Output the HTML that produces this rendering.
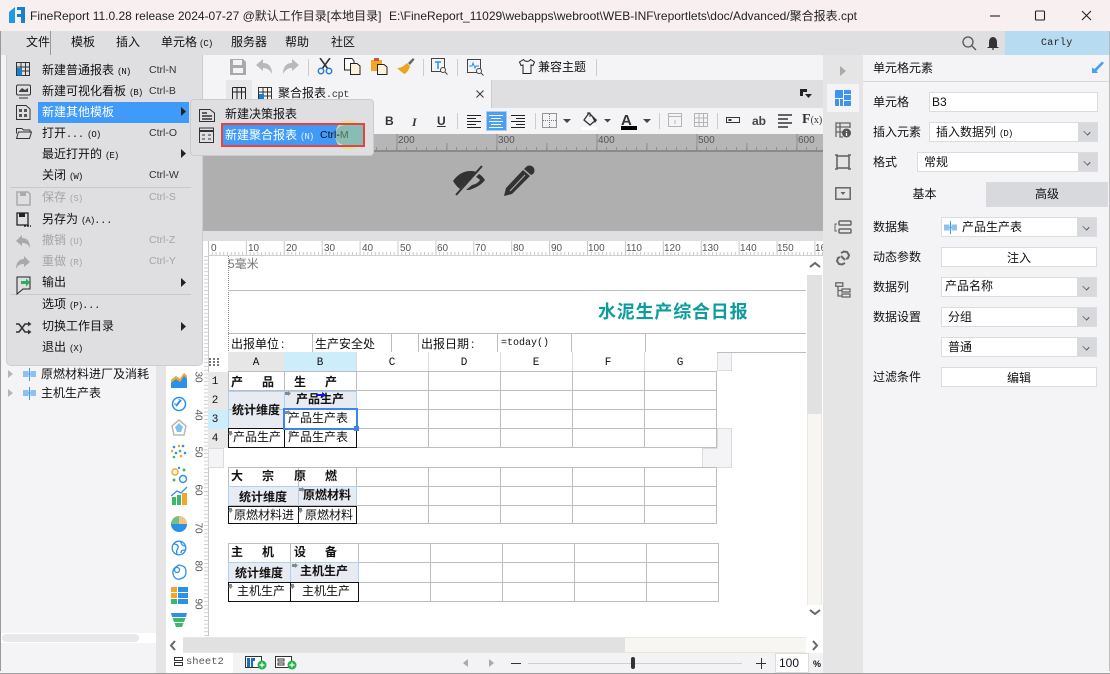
<!DOCTYPE html>
<html><head><meta charset="utf-8"><style>
html,body{margin:0;padding:0;width:1110px;height:674px;overflow:hidden;background:#fff}
#p{position:relative;width:1110px;height:674px;overflow:hidden;font:12px/12px "Liberation Sans","WenQuanYi Zen Hei","Noto Sans CJK SC",sans-serif;color:#111}
.b,.t,svg.a{position:absolute}
.t{white-space:nowrap;line-height:12px}
.m{font-family:"Liberation Mono","WenQuanYi Zen Hei",monospace}
.q{font-family:"Liberation Mono",monospace;font-size:9px;letter-spacing:-1px;margin-left:3px}
.s{font-size:10.5px;color:#333}
.g{color:#a5a5a5}
.r{font:10px/10px "Liberation Sans",sans-serif;color:#555}
.d{background:#fff;border:1px solid #dcdcdf;box-sizing:border-box}
.ar{position:absolute;top:0;right:0;width:19px;height:100%;background:#d8d9dc}
.ar:after{content:"";position:absolute;left:6px;top:6px;width:5px;height:5px;border:solid #555;border-width:0 1px 1px 0;transform:rotate(45deg) scaleY(.7)}
.c{text-align:center}
</style></head><body><div id="p">
<!-- title bar -->
<div class="b" style="left:0;top:0;width:1110px;height:31px;background:#f8f0f0"></div>
<div class="b" style="left:0;top:31px;width:1110px;height:24px;background:#dfdfe1"></div>
<svg class="a" style="left:9px;top:7px" width="16" height="16" viewBox="0 0 16 16"><path d="M0 5L6 0V16H0Z" fill="#1c9be6"/><path d="M8 0H16V16H12V10H8V7H12V3H8Z" fill="#1b7fd0"/></svg>
<div class="t" style="left:30px;top:10px;font-family:'Liberation Sans','Noto Sans CJK SC',sans-serif;font-size:12px;color:#222">FineReport 11.0.28 release 2024-07-27 @默认工作目录[本地目录]</div>
<div class="t" style="left:389px;top:10px;font-family:'Liberation Sans','Noto Sans CJK SC',sans-serif;font-size:12px;color:#222">E:\FineReport_11029\webapps\webroot\WEB-INF\reportlets\doc/Advanced/聚合报表.cpt</div>
<svg class="a" style="left:990px;top:8px" width="110" height="16" fill="none" stroke="#222" stroke-width="1.1"><path d="M0 8H10"/><rect x="45.5" y="3" width="9" height="9" rx="1"/><path d="M92 3L101 12M101 3L92 12"/></svg>
<!-- menu bar right -->
<svg class="a" style="left:961px;top:35px" width="40" height="16" fill="none" stroke="#555" stroke-width="1.3"><circle cx="7" cy="7" r="5"/><path d="M11 11L15 15"/><path d="M28 12V7C28 4 30 2 32 2S36 4 36 7V12H37.5V13H26.5V12Z" fill="#333" stroke="none"/><path d="M31 14H33" stroke="#333"/></svg>
<div class="b" style="left:1005px;top:31px;width:104px;height:24px;background:#b7dbf0"></div>
<div class="t m" style="left:1041px;top:38px;font-size:10px;letter-spacing:.3px;color:#222">Carly</div>
<!-- main toolbars -->
<div class="b" style="left:166px;top:55px;width:657px;height:79px;background:#f4f4f6"></div>
<div class="b" style="left:226px;top:80px;width:597px;height:28px;background:#dfdfe1"></div>
<div class="b" style="left:226px;top:80px;width:266px;height:28px;background:#f4f4f6;border-right:1px solid #ccc;box-sizing:border-box"></div>
<div class="b" style="left:226px;top:80px;width:26px;height:28px;background:#e7e7e9"></div>
<svg class="a" style="left:232px;top:87px" width="14" height="14" fill="none" stroke="#222"><path d="M.5.5H13.5M.5 5H13.5M.5.5V13M5 .5V13M9.5 .5V13M13.5 .5V13"/></svg>
<svg class="a" style="left:258px;top:87px" width="14" height="14" fill="none" stroke="#333"><path d="M.5.5H13.5V13.5H.5ZM.5 5H13.5M5 .5V13.5M9.5 .5V13.5M5 9H13.5"/><rect x="1" y="7" width="5" height="6.5" fill="#1b7fd0" stroke="none"/></svg>
<div class="t" style="left:278px;top:87px">聚合报表<span class="m" style="font-size:10px;letter-spacing:-.2px;color:#333">.cpt</span></div>
<svg class="a" style="left:476px;top:90px" width="8" height="8" stroke="#333"><path d="M.5.5L7.5 7.5M7.5.5L.5 7.5"/></svg>
<svg class="a" style="left:799px;top:88px" width="14" height="11"><path d="M1 1H8V4H4V8H1Z" fill="#222"/><path d="M6 6H13L9.5 10Z" fill="#222"/></svg>
<!-- toolbar icons -->
<svg class="a" style="left:229px;top:58px" width="18" height="18"><path d="M1 1H14L17 4V17H1Z" fill="#a9a9ab"/><rect x="4" y="2" width="9" height="5" fill="#f4f4f6"/><rect x="4" y="10" width="10" height="5" fill="#f4f4f6"/></svg>
<svg class="a" style="left:256px;top:59px" width="44" height="16" fill="#b9b9bb"><path d="M0 6L7 0V4C13 4 16 8 16 15C14 11 11 9 7 9V12Z"/><path d="M43 6L36 0V4C30 4 27 8 27 15C29 11 32 9 36 9V12Z"/></svg>
<div class="b" style="left:308px;top:59px;width:1px;height:17px;background:#ccc"></div>
<svg class="a" style="left:317px;top:58px" width="16" height="17" fill="none"><path d="M3 0L11 11M13 0L5 11" stroke="#333" stroke-width="1.6"/><circle cx="4" cy="13" r="2.7" stroke="#2a7fd5" stroke-width="1.5"/><circle cx="12" cy="13" r="2.7" stroke="#2a7fd5" stroke-width="1.5"/></svg>
<svg class="a" style="left:344px;top:58px" width="17" height="17" stroke="#222"><path d="M.5.5H8L10 3V12H.5Z" fill="#fff"/><path d="M6.5 5.5H13L16 8V16.5H6.5Z" fill="#fdf3dc"/></svg>
<svg class="a" style="left:371px;top:58px" width="17" height="17"><path d="M0 2H11V13H0Z" fill="#f0a820"/><rect x="3" y="0" width="5" height="3" fill="#d05050"/><path d="M6.5 6.5H13L16 9V16.5H6.5Z" fill="#fdf3dc" stroke="#222"/></svg>
<svg class="a" style="left:397px;top:58px" width="18" height="17"><path d="M11 5L16 0L17.500 1.500L13 7Z" fill="#666"/><path d="M0 10C5 10 8 7 10 5L13 8C12 12 9 16 7 16C5 14 3 13 0 10Z" fill="#eea41f"/></svg>
<div class="b" style="left:423px;top:59px;width:1px;height:17px;background:#ccc"></div>
<svg class="a" style="left:431px;top:58px" width="17" height="17" fill="none" stroke="#444"><rect x=".5" y=".5" width="13" height="13"/><path d="M4 4H10M7 4V11" stroke="#2a8fe8" stroke-width="1.500"/><circle cx="12" cy="12" r="2.500" fill="#f4f4f6"/><path d="M14 14L16.500 16.500"/></svg>
<div class="b" style="left:457px;top:59px;width:1px;height:17px;background:#ccc"></div>
<svg class="a" style="left:467px;top:59px" width="17" height="17" fill="none" stroke="#444"><rect x=".5" y=".5" width="13" height="13"/><path d="M2 7H5L6 4L8 9L9 7H12" stroke="#2a8fe8"/><circle cx="12" cy="12" r="2.500" fill="#f4f4f6"/><path d="M14 14L16.500 16.500"/></svg>
<svg class="a" style="left:519px;top:59px" width="16" height="15" fill="none" stroke="#222"><path d="M4.500.5L.5 3L2 6.500L4 6V14.500H12V6L14 6.500L15.500 3L11.500.5C10 3 6 3 4.500.5Z"/></svg>
<div class="t" style="left:538px;top:61px">兼容主题</div>
<div class="b" style="left:596px;top:59px;width:1px;height:17px;background:#ccc"></div>
<!-- format bar -->
<div class="t" style="left:385px;top:115px;font-weight:bold;color:#333">B</div>
<div class="t" style="left:412px;top:115px;font:italic bold 12px 'Liberation Serif',serif;color:#333">I</div>
<div class="t" style="left:437px;top:115px;font-weight:bold;color:#333;text-decoration:underline">U</div>
<div class="b" style="left:457px;top:113px;width:1px;height:16px;background:#ccc"></div>
<div class="b" style="left:486px;top:111px;width:21px;height:20px;background:#4a9ff5;border:1px solid #b5cbe3;box-sizing:border-box"></div>
<svg class="a" style="left:466px;top:115px" width="62" height="13"><path d="M1 .5H15M1 3.500H10M1 6.500H15M1 9.500H10M1 12.500H15" stroke="#222"/><path d="M23 .5H37M25 3.500H35M23 6.500H37M25 9.500H35M23 12.500H37" stroke="#fff"/><path d="M45 .5H59M50 3.500H59M45 6.500H59M50 9.500H59M45 12.500H59" stroke="#222"/></svg>
<div class="b" style="left:535px;top:113px;width:1px;height:16px;background:#ccc"></div>
<svg class="a" style="left:542px;top:113px" width="30" height="16"><rect x=".5" y=".5" width="14" height="14" fill="none" stroke="#333" stroke-dasharray="1 1"/><path d="M7.500 1V15M1 7.500H15" stroke="#777" stroke-dasharray="1 1"/><path d="M21 6H29L25 10Z" fill="#444"/></svg>
<svg class="a" style="left:581px;top:112px" width="32" height="18"><path d="M8 1L15 8L9 13L3 8Z" fill="#f4f4f6" stroke="#333" stroke-width="1.300"/><path d="M6 1H9V5" fill="none" stroke="#333"/><path d="M10 3L16 8L14 11Z" fill="#333"/><rect x="0" y="15" width="16" height="3" fill="#fff"/><path d="M23 7H30L26.500 10.500Z" fill="#444"/></svg>
<svg class="a" style="left:621px;top:113px" width="34" height="17"><text x="0" y="12" font-family="Liberation Sans" font-weight="bold" font-size="15" fill="#333">A</text><rect x="0" y="13" width="16" height="4" fill="#000"/><path d="M22 6H30L26 10Z" fill="#444"/></svg>
<div class="b" style="left:659px;top:113px;width:1px;height:16px;background:#ccc"></div>
<svg class="a" style="left:668px;top:113px" width="48" height="15" fill="none" stroke="#b5b5b5"><rect x=".5" y=".5" width="13" height="13"/><path d="M.5 3.500H13.500M7 7V11"/><rect x="26.500" y=".5" width="13" height="13"/><path d="M26.500 5H39.500M26.500 9.500H39.500M31 .5V13.500M35.500 .5V13.500"/></svg>
<div class="b" style="left:717px;top:113px;width:1px;height:16px;background:#ccc"></div>
<svg class="a" style="left:726px;top:117px" width="14" height="7" fill="none" stroke="#333"><rect x=".5" y=".5" width="13" height="5"/><rect x="3" y="2.500" width="2" height="1" fill="#333"/></svg>
<div class="t" style="left:752px;top:115px;font-weight:bold;color:#444">ab</div>
<svg class="a" style="left:778px;top:114px" width="14" height="14" stroke="#333" stroke-width="1.600"><path d="M0 1H14M0 5H10M0 9H14M0 13H10"/></svg>
<div class="t" style="left:802px;top:113px;font:bold 14px/14px 'Liberation Serif',serif;color:#333">F<span style="font-size:10px;font-weight:normal">(x)</span></div>
<!-- dim ruler -->
<div class="b" style="left:166px;top:134px;width:657px;height:97px;background:#afafaf"></div>
<svg class="a" style="left:166px;top:134px" width="657" height="18"><defs><pattern id="r1" width="10" height="18" patternUnits="userSpaceOnUse" x="0"><path d="M.5 13V16" stroke="#8f8f8f"/></pattern><pattern id="r2" width="100" height="18" patternUnits="userSpaceOnUse" x="30.500"><path d="M.5 0V16M50.500 9V16" stroke="#8f8f8f"/></pattern></defs><rect width="657" height="18" fill="#b6b6b6"/><rect width="657" height="16" fill="url(#r1)"/><rect width="657" height="16" fill="url(#r2)"/><rect y="16" width="657" height="2" fill="#8a8a8a"/></svg>
<div class="t r" style="left:398px;top:136px">200</div><div class="t r" style="left:498px;top:136px">300</div><div class="t r" style="left:598px;top:136px">400</div><div class="t r" style="left:698px;top:136px">500</div><div class="t r" style="left:798px;top:136px">600</div>
<svg class="a" style="left:452px;top:165px" width="34" height="32"><path d="M1 16C6 9 12 6 18 6C20 6 22 6 24 7L8 24C5 22 3 19 1 16ZM20 24C25 22 29 20 33 15C31 12 29 10 27 9L24 12C26 13 27 14 28 15C26 18 24 19 20 20L14 25C16 25 18 25 20 24Z" fill="#333"/><path d="M30 1L4 30" stroke="#333" stroke-width="2"/></svg>
<svg class="a" style="left:503px;top:165px" width="32" height="32"><path d="M23 2C25 0 28 0 30 2C32 4 32 7 30 9L28 10L21 4Z" fill="#333"/><path d="M20 5L27 11L9 29L1 31L3 23Z" fill="#333"/><path d="M7 26L22 10" stroke="#afafaf"/></svg>
<div class="b" style="left:166px;top:231px;width:657px;height:10px;background:#dfdfe1"></div>
<!-- sheet area -->
<div class="b" style="left:166px;top:241px;width:657px;height:395px;background:#fff"></div>
<svg class="a" style="left:208px;top:241px" width="615" height="15"><defs><pattern id="r3" width="3.790" height="15" patternUnits="userSpaceOnUse"><path d="M.5 11V14" stroke="#c9c9c9"/></pattern><pattern id="r4" width="37.900" height="15" patternUnits="userSpaceOnUse"><path d="M.5 0V14" stroke="#c9c9c9"/></pattern></defs><rect width="615" height="14" fill="url(#r3)"/><rect width="615" height="14" fill="url(#r4)"/><rect y="14" width="615" height="1" fill="#d0d0d0"/></svg>
<div class="t r" style="left:211px;top:244px">0</div><div class="t r" style="left:248px;top:244px">10</div><div class="t r" style="left:286px;top:244px">20</div><div class="t r" style="left:324px;top:244px">30</div><div class="t r" style="left:362px;top:244px">40</div><div class="t r" style="left:400px;top:244px">50</div><div class="t r" style="left:437px;top:244px">60</div><div class="t r" style="left:475px;top:244px">70</div><div class="t r" style="left:513px;top:244px">80</div><div class="t r" style="left:551px;top:244px">90</div><div class="t r" style="left:588px;top:244px">100</div><div class="t r" style="left:626px;top:244px">110</div><div class="t r" style="left:664px;top:244px">120</div><div class="t r" style="left:702px;top:244px">130</div><div class="t r" style="left:740px;top:244px">140</div><div class="t r" style="left:777px;top:244px">150</div><div class="t r" style="left:815px;top:244px">16</div>
<!-- left vertical ruler -->
<svg class="a" style="left:200px;top:256px" width="9" height="380"><defs><pattern id="r5" width="9" height="3.790" patternUnits="userSpaceOnUse"><path d="M4 .5H8" stroke="#d0d0d0"/></pattern></defs><rect width="8" height="380" fill="url(#r5)"/><rect x="8" width="1" height="380" fill="#c8c8c8"/></svg>
<div class="t r" style="left:192px;top:372px;transform:rotate(90deg)">30</div><div class="t r" style="left:192px;top:410px;transform:rotate(90deg)">40</div><div class="t r" style="left:192px;top:447px;transform:rotate(90deg)">50</div><div class="t r" style="left:192px;top:485px;transform:rotate(90deg)">60</div><div class="t r" style="left:192px;top:523px;transform:rotate(90deg)">70</div><div class="t r" style="left:192px;top:561px;transform:rotate(90deg)">80</div><div class="t r" style="left:192px;top:599px;transform:rotate(90deg)">90</div>
<!-- chart icons -->
<svg class="a" style="left:171px;top:372px" width="17" height="258">
<path d="M0 8L5 4L9 7L13 1L16 4V16H0Z" fill="#2a90e8"/><path d="M0 8L5 4L9 7L13 1L16 4V7L13 4L9 10L5 7L0 11Z" fill="#f2a72a"/>
<circle cx="8" cy="32" r="6.500" fill="none" stroke="#2a90e8" stroke-width="1.500"/><path d="M5 34L10 28" stroke="#2a90e8" stroke-width="2"/><path d="M3 32H5M8 27V28" stroke="#2a90e8"/>
<path d="M8 48L15 54L13 63H3L1 54Z" fill="none" stroke="#b8b8b8" stroke-width="1.500"/><path d="M8 51L12 55L10 60H6L4 55Z" fill="#7cc4e8"/>
<g fill="#2a90e8"><circle cx="3" cy="75" r="1.300"/><circle cx="12" cy="74" r="1.300"/><circle cx="5" cy="81" r="1.300"/><circle cx="14" cy="81" r="1.300"/></g><g fill="#f2a72a"><circle cx="8" cy="74" r="1.300"/><circle cx="1" cy="79" r="1.300"/><circle cx="10" cy="84" r="1.300"/></g><g fill="#3cb869"><circle cx="9" cy="79" r="1.300"/><circle cx="3" cy="85" r="1.300"/></g>
<g fill="none" stroke-width="1.400"><circle cx="4" cy="100" r="3" stroke="#f2a72a"/><circle cx="12" cy="107" r="3.500" stroke="#2a90e8"/></g><circle cx="13" cy="98" r="1.500" fill="#3cb869"/><circle cx="3" cy="108" r="1.500" fill="#3cb869"/><circle cx="8" cy="96" r="1.200" fill="#2a90e8"/>
<path d="M1 125V133H5V125ZM6 123V133H10V123Z" fill="#3cb869"/><path d="M11 121V133H16V121Z" fill="#f2a72a"/><path d="M0 124L6 119L10 121L16 115" fill="none" stroke="#2a90e8" stroke-width="1.300"/>
<circle cx="8" cy="152" r="8" fill="#6fc27f"/><path d="M8 152V144A8 8 0 0 1 16 152Z" fill="#f6c285"/><path d="M0 152A8 8 0 0 0 16 152H8Z" fill="#2a90e8"/>
<g fill="none" stroke="#2a90e8" stroke-width="1.300"><circle cx="8" cy="176" r="6.800"/><path d="M3 172C6 172 8 174 7 176S5 179 6 182M10 170C10 173 13 174 14 174M10 181C10 178 12 178 14 178"/><path d="M8 193C4 195 1 198 2 202S6 208 9 207 15 205 15 200 13 194 8 193Z"/></g><circle cx="6" cy="198" r="2.500" fill="none" stroke="#2a90e8" stroke-width="1.300"/>
<rect x="0" y="215" width="6" height="5" fill="#f2a72a"/><rect x="0" y="221" width="6" height="5" fill="#f2a72a"/><rect x="0" y="227" width="6" height="5" fill="#3cb869"/><rect x="7" y="215" width="10" height="5" fill="#2a90e8"/><rect x="7" y="221" width="10" height="5" fill="#2a90e8"/><rect x="7" y="227" width="10" height="5" fill="#2a90e8"/>
<path d="M0 241H16L15 245H1Z" fill="#2a90e8"/><path d="M1.500 246H14.500L13 250H3Z" fill="#3cb869"/><path d="M3.500 251H12.500L11 255H5Z" fill="#3cb869"/>
</svg>
<!-- grid -->
<div class="b" style="left:228px;top:352px;width:56px;height:20px;background:#e6e6e6"></div>
<div class="b" style="left:284px;top:352px;width:73px;height:20px;background:#cdedfa"></div>
<div class="b" style="left:208px;top:372px;width:20px;height:76px;background:#e8e8e8"></div>
<div class="b" style="left:208px;top:410px;width:20px;height:19px;background:#cdedfa"></div>
<div class="b" style="left:229px;top:391px;width:127px;height:38px;background:#e8ebf2"></div>
<div class="b" style="left:229px;top:487px;width:127px;height:19px;background:#e8ebf2"></div>
<div class="b" style="left:229px;top:563px;width:129px;height:19px;background:#e8ebf2"></div>
<div class="b" style="left:285px;top:410px;width:71px;height:19px;background:#fff"></div>
<div class="b" style="left:717px;top:352px;width:15px;height:19px;background:#f4f4f6;border:1px solid #dcdcdc;box-sizing:border-box"></div>
<svg class="a" style="left:702px;top:428px" width="30" height="40"><path d="M15.500.5H29.500V39.500H.5V20.500H15.500Z" fill="#f4f4f6" stroke="#dcdcdc"/></svg>
<div class="b" style="left:208px;top:448px;width:16px;height:20px;background:#f4f4f6;border:1px solid #dcdcdc;box-sizing:border-box"></div>
<svg class="a" style="left:0;top:0" width="1110" height="674" shape-rendering="crispEdges" fill="none" stroke="#bdbdbd">
<path d="M228.500 256V352" stroke-dasharray="1 1" stroke="#888"/>
<path d="M228 290.500H806M228 333.500H806M312.500 333V352M391.500 333V352M418.500 333V352M497.500 333V352M571.500 333V352M645.500 333V352"/>
<path d="M356.500 352V372M428.500 352V372M500.500 352V372M572.500 352V372M644.500 352V372" stroke="#dcdcdc"/>
<path d="M717 352.500H806"/>
<path d="M228 371.500H717M228 390.500H717M228 409.500H717M228 428.500H717M228 447.500H717M228.500 372V448M284.500 372V448M356.500 372V448M428.500 372V448M500.500 372V448M572.500 372V448M644.500 372V448M716.500 372V448"/>
<path d="M228 467.500H717M228 486.500H717M228 505.500H717M228 523.500H717M228.500 467V524M298.500 467V524M356.500 467V524M428.500 467V524M500.500 467V524M572.500 467V524M644.500 467V524M716.500 467V524"/>
<path d="M228 543.500H719M228 562.500H719M228 582.500H719M228 601.500H719M228.500 543V602M290.500 543V602M358.500 543V602M430.500 543V602M502.500 543V602M574.500 543V602M646.500 543V602M718.500 543V602"/>
<path d="M228 391.500H357M284.500 391V429M356.500 391V429M228.500 391V429M228 486.500H357M229 562.500H358" stroke="#a9d3f5"/>
<path d="M228.500 429V448M284.500 429V448M356.500 429V448M228 428.500H357M228 447.500H357M228 506.500H357M228 523.500H357M228.500 506V524M298.500 506V524M356.500 506V524M228 582.500H358M228 601.500H358M228.500 582V602M290.500 582V602M358.500 582V602" stroke="#111"/>
<path d="M228.500 486V506M298.500 486V506M356.500 486V506M228.500 562V582M290.500 562V582M358.500 562V582" stroke="#a9d3f5"/>
</svg>
<!-- grid text -->
<svg class="a" style="left:209px;top:358px" width="13" height="8" fill="#777"><path d="M0 0H2V2H0ZM4 0H6V2H4ZM8 0H10V2H8ZM0 3H2V5H0ZM4 3H6V5H4ZM8 3H10V5H8ZM0 6H2V8H0ZM4 6H6V8H4ZM8 6H10V8H8Z"/></svg>
<div class="t" style="left:228px;top:258px;color:#777">5毫米</div>
<div class="t" style="left:598px;top:303px;font-size:18px;line-height:18px;font-weight:bold;color:#0b9d9d;font-family:'Liberation Sans','Noto Sans CJK SC',sans-serif;letter-spacing:.8px">水泥生产综合日报</div>
<div class="t" style="left:231px;top:338px">出报单位<span style="margin-left:2px">:</span></div><div class="t" style="left:315px;top:338px">生产安全处</div><div class="t" style="left:421px;top:338px">出报日期<span style="margin-left:2px">:</span></div><div class="t m" style="left:501px;top:338px;font-size:10px">=today()</div>
<div class="t m c" style="left:228px;top:357px;width:56px;font-size:11px">A</div><div class="t m c" style="left:284px;top:357px;width:72px;font-size:11px">B</div><div class="t m c" style="left:356px;top:357px;width:72px;font-size:11px">C</div><div class="t m c" style="left:428px;top:357px;width:72px;font-size:11px">D</div><div class="t m c" style="left:500px;top:357px;width:72px;font-size:11px">E</div><div class="t m c" style="left:572px;top:357px;width:72px;font-size:11px">F</div><div class="t m c" style="left:644px;top:357px;width:72px;font-size:11px">G</div>
<div class="t m c" style="left:208px;top:376px;width:14px;font-size:11px">1</div><div class="t m c" style="left:208px;top:395px;width:14px;font-size:11px">2</div><div class="t m c" style="left:208px;top:414px;width:14px;font-size:11px">3</div><div class="t m c" style="left:208px;top:433px;width:14px;font-size:11px">4</div>
<div class="t" style="left:231px;top:376px;font-weight:bold">产</div><div class="t" style="left:262px;top:376px;font-weight:bold">品</div><div class="t" style="left:294px;top:376px;font-weight:bold">生</div><div class="t" style="left:325px;top:376px;font-weight:bold">产</div>
<div class="t" style="left:232px;top:404px;font-weight:bold">统计维度</div><div class="t" style="left:296px;top:393px;font-weight:bold">产品生产</div>
<div class="t" style="left:288px;top:412px">产品生产表</div><div class="t" style="left:233px;top:431px">产品生产</div><div class="t" style="left:288px;top:431px">产品生产表</div>
<div class="t" style="left:231px;top:470px;font-weight:bold">大</div><div class="t" style="left:262px;top:470px;font-weight:bold">宗</div><div class="t" style="left:294px;top:470px;font-weight:bold">原</div><div class="t" style="left:325px;top:470px;font-weight:bold">燃</div>
<div class="t" style="left:239px;top:491px;font-weight:bold">统计维度</div><div class="t" style="left:303px;top:489px;font-weight:bold">原燃材料</div>
<div class="t" style="left:234px;top:509px">原燃材料进</div><div class="t" style="left:305px;top:509px">原燃材料</div>
<div class="t" style="left:231px;top:546px;font-weight:bold">主</div><div class="t" style="left:262px;top:546px;font-weight:bold">机</div><div class="t" style="left:294px;top:546px;font-weight:bold">设</div><div class="t" style="left:325px;top:546px;font-weight:bold">备</div>
<div class="t" style="left:235px;top:567px;font-weight:bold">统计维度</div><div class="t" style="left:300px;top:565px;font-weight:bold">主机生产</div>
<div class="t" style="left:237px;top:585px">主机生产</div><div class="t" style="left:302px;top:585px">主机生产</div>
<svg class="a" style="left:0;top:0" width="1110" height="674" fill="#888"><path d="M229 431H232V433H233L230.500 436L228 433H229ZM289 431H292V433H293L290.500 436L288 433H289ZM229 508H232V510H233L230.500 513L228 510H229ZM299 508H302V510H303L300.500 513L298 510H299ZM229 584H232V586H233L230.500 589L228 586H229ZM291 584H294V586H295L292.500 589L290 586H291Z"/><path d="M285 392H288V391L291 393.500L288 396V395H285ZM285 411H288V410L291 412.500L288 415V414H285ZM299 488H302V487L305 489.500L302 492V491H299ZM292 564H295V563L298 565.500L295 568V567H292Z"/><path d="M316 394H322V392L326 395L322 398V396H316Z" fill="#1717d8"/></svg>
<div class="b" style="left:283px;top:408px;width:75px;height:22px;border:2px solid #3a84ea;box-sizing:border-box"></div>
<div class="b" style="left:354px;top:426px;width:5px;height:5px;background:#3a84ea"></div>
<!-- scrollbars -->
<div class="b" style="left:806px;top:256px;width:17px;height:380px;background:#fff"></div>
<div class="b" style="left:807px;top:275px;width:15px;height:139px;background:#e1e1e1"></div>
<div class="b" style="left:807px;top:414px;width:15px;height:191px;background:#f7f6f3;border-left:1px solid #ece7dd;border-right:1px solid #ece7dd;box-sizing:border-box"></div>
<svg class="a" style="left:809px;top:261px" width="12" height="8" fill="none" stroke="#666" stroke-width="2"><path d="M1 6L6 2L11 6"/></svg>
<svg class="a" style="left:809px;top:608px" width="12" height="8" fill="none" stroke="#666" stroke-width="2"><path d="M1 2L6 6L11 2"/></svg>
<div class="b" style="left:183px;top:637px;width:442px;height:16px;background:#e1e1e1;border-top:1px solid #ece7dd;border-bottom:1px solid #ece7dd;box-sizing:border-box"></div>
<div class="b" style="left:625px;top:637px;width:181px;height:16px;background:#f7f6f3;border-top:1px solid #ece7dd;border-bottom:1px solid #ece7dd;box-sizing:border-box"></div>
<div class="b" style="left:166px;top:637px;width:17px;height:16px;background:#fff"></div>
<svg class="a" style="left:169px;top:640px" width="8" height="11" fill="none" stroke="#666" stroke-width="2"><path d="M6 1L2 5.500L6 10"/></svg>
<svg class="a" style="left:811px;top:640px" width="8" height="11" fill="none" stroke="#666" stroke-width="2"><path d="M2 1L6 5.500L2 10"/></svg>
<!-- bottom bar -->
<div class="b" style="left:166px;top:653px;width:657px;height:20px;background:#f3f3f5"></div>
<div class="b" style="left:166px;top:653px;width:67px;height:20px;background:#fff"></div>
<div class="b" style="left:0;top:673px;width:1110px;height:1px;background:#a0a0a0"></div>
<svg class="a" style="left:174px;top:657px" width="9" height="9" fill="none" stroke="#333"><path d="M.5.5H8.500V3.500H.5ZM.5 5.500H8.500V8.500H.5Z"/></svg>
<div class="t m" style="left:186px;top:656px;font-size:10.500px;color:#555">sheet2</div>
<svg class="a" style="left:245px;top:656px" width="56" height="14"><rect x=".5" y=".5" width="16" height="11" fill="#fff" stroke="#333"/><path d="M2 2H5V11H2ZM6 2H10V5H8V11H6Z" fill="#1b6fc0"/><rect x="30.500" y=".5" width="16" height="11" fill="#fff" stroke="#333"/><path d="M33 3H39V5H33ZM33 7H39V9H33Z" fill="none" stroke="#333"/><circle cx="17" cy="9" r="4.500" fill="#22b24c"/><path d="M14.500 9H19.500M17 6.500V11.500" stroke="#fff" stroke-width="1.200"/><circle cx="47" cy="9" r="4.500" fill="#22b24c"/><path d="M44.500 9H49.500M47 6.500V11.500" stroke="#fff" stroke-width="1.200"/></svg>
<svg class="a" style="left:463px;top:659px" width="32" height="9" fill="#aaa"><path d="M5 0V8L0 4Z"/><path d="M26 0V8L31 4Z"/></svg>
<div class="b" style="left:511px;top:663px;width:10px;height:1px;background:#333"></div>
<div class="b" style="left:528px;top:663px;width:214px;height:1px;background:#cfcfcf"></div>
<div class="b" style="left:631px;top:657px;width:4px;height:12px;background:#333;border-radius:2px"></div>
<div class="b" style="left:756px;top:663px;width:10px;height:1px;background:#333"></div>
<div class="b" style="left:761px;top:658px;width:1px;height:11px;background:#333"></div>
<div class="b d" style="left:775px;top:653px;width:34px;height:20px"></div>
<div class="t" style="left:779px;top:657px;font-size:12px;color:#112">100</div>
<div class="t" style="left:813px;top:658px;font-size:9px;font-weight:bold">%</div>
<!-- left tree -->
<div class="b" style="left:0;top:55px;width:156px;height:618px;background:#f4f4f6"></div>
<div class="b" style="left:156px;top:55px;width:10px;height:618px;background:#e5e5e5"></div>
<div class="b" style="left:0;top:633px;width:156px;height:10px;background:#fff"></div>
<div class="b" style="left:2px;top:634px;width:137px;height:8px;background:#e8e8e8;border-radius:4px"></div>
<svg class="a" style="left:7px;top:368px" width="30" height="32"><path d="M1 2V10L6 6ZM1 21V29L6 25Z" fill="#b5b5b5"/><path d="M16 6H29M22.500 0V13" stroke="#3f9bf7" fill="none"/><rect x="16" y="3" width="5.500" height="6" fill="#8fc0ee"/><rect x="23.500" y="3" width="5.500" height="6" fill="#8fc0ee"/><path d="M16 25H29M22.500 19V32" stroke="#3f9bf7" fill="none"/><rect x="16" y="22" width="5.500" height="6" fill="#8fc0ee"/><rect x="23.500" y="22" width="5.500" height="6" fill="#8fc0ee"/></svg>
<div class="t" style="left:41px;top:368px">原燃材料进厂及消耗</div>
<div class="t" style="left:41px;top:387px">主机生产表</div>
<!-- right -->
<div class="b" style="left:823px;top:55px;width:40px;height:618px;background:#e5e5e6"></div>
<div class="b" style="left:863px;top:55px;width:247px;height:618px;background:#f4f4f6"></div>
<div class="b" style="left:863px;top:81px;width:247px;height:1px;background:#d8d8da"></div>
<div class="t" style="left:873px;top:62px">单元格元素</div>
<svg class="a" style="left:1091px;top:61px" width="14" height="13"><path d="M1 12H7L5.500 10L13 2L11 .5L3.500 8L1 6.500Z" fill="#4a9ff5"/></svg>
<svg class="a" style="left:840px;top:66px" width="6" height="10"><path d="M0 0L6 5L0 10Z" fill="#aaa"/></svg>
<div class="b" style="left:827px;top:84px;width:32px;height:28px;background:#f4f4f6"></div>
<svg class="a" style="left:835px;top:90px" width="16" height="16" fill="#3f93f0"><path d="M0 1Q0 0 1 0H8V8H0ZM9 0H15Q16 0 16 1V4H9ZM9 5H16V10H9ZM0 9H4V16H1Q0 16 0 15ZM5 9H8V16H5ZM9 11H16V15Q16 16 15 16H9Z"/></svg>
<svg class="a" style="left:835px;top:122px" width="16" height="16" fill="none" stroke="#666" stroke-width="1.300"><path d="M1 15V1H15V6M1 5H15M5 1V15H8M1 10H7"/><circle cx="11.500" cy="11" r="4.500" fill="#555" stroke="none"/><path d="M11.500 9V10M11.500 11V14" stroke="#fff"/></svg>
<svg class="a" style="left:835px;top:154px" width="16" height="16" fill="none" stroke="#666" stroke-width="1.600"><rect x="2" y="2" width="12" height="12"/><path d="M0 1H3M13 1H16M0 15H3M13 15H16" stroke="#666"/></svg>
<svg class="a" style="left:835px;top:187px" width="16" height="13" fill="none" stroke="#666" stroke-width="1.500"><rect x=".8" y=".8" width="14.400" height="11.400"/><path d="M5.500 5H10.500L8 8Z" fill="#666" stroke="none"/></svg>
<svg class="a" style="left:834px;top:220px" width="18" height="14" fill="none" stroke="#666" stroke-width="1.500"><rect x="5" y="1" width="12" height="4" rx="1"/><rect x="5" y="9" width="12" height="4" rx="1"/><path d="M3 4H1V11H3" stroke-width="1"/></svg>
<svg class="a" style="left:835px;top:250px" width="16" height="16" fill="none" stroke="#666" stroke-width="2"><path d="M6 3L9 1.500L12 2L14 5L13 8L11 9M10 13L7 14.500L4 14L2 11L3 8L5 7M6 6L10 10"/></svg>
<svg class="a" style="left:835px;top:282px" width="16" height="16" fill="none" stroke="#666" stroke-width="1.300"><rect x=".8" y=".8" width="7" height="3.500"/><rect x="7" y="7" width="8" height="3"/><rect x="7" y="12" width="8" height="3"/><path d="M3 4V14H7M3 8.500H7"/></svg>
<div class="t" style="left:873px;top:96px">单元格</div>
<div class="t" style="left:873px;top:126px">插入元素</div>
<div class="t" style="left:873px;top:156px">格式</div>
<div class="b d" style="left:929px;top:92px;width:169px;height:20px"></div><div class="t" style="left:932px;top:96px">B3</div>
<div class="b d" style="left:929px;top:122px;width:169px;height:20px"><div class="ar"></div></div><div class="t" style="left:936px;top:126px">插入数据列<span class="q">(D)</span></div>
<div class="b d" style="left:917px;top:152px;width:181px;height:20px"><div class="ar"></div></div><div class="t" style="left:924px;top:156px">常规</div>
<div class="b" style="left:986px;top:182px;width:122px;height:25px;background:#d8d9dc"></div>
<div class="t c" style="left:863px;top:188px;width:123px">基本</div><div class="t c" style="left:986px;top:188px;width:122px">高级</div>
<div class="t" style="left:873px;top:221px">数据集</div><div class="t" style="left:873px;top:251px">动态参数</div><div class="t" style="left:873px;top:281px">数据列</div><div class="t" style="left:873px;top:311px">数据设置</div><div class="t" style="left:873px;top:371px">过滤条件</div>
<div class="b d" style="left:941px;top:217px;width:156px;height:20px"><div class="ar"></div></div>
<svg class="a" style="left:944px;top:221px" width="13" height="13"><path d="M0 6.500H13M6.500 0V13" stroke="#3f9bf7" fill="none"/><rect x="0" y="3.500" width="5.500" height="6" fill="#8fc0ee"/><rect x="7.500" y="3.500" width="5.500" height="6" fill="#8fc0ee"/></svg>
<div class="t" style="left:962px;top:221px">产品生产表</div>
<div class="b d c" style="left:941px;top:247px;width:156px;height:20px;padding-top:4px">注入</div>
<div class="b d" style="left:941px;top:277px;width:156px;height:20px"><div class="ar"></div></div><div class="t" style="left:945px;top:280px">产品名称</div>
<div class="b d" style="left:941px;top:307px;width:156px;height:20px"><div class="ar"></div></div><div class="t" style="left:948px;top:311px">分组</div>
<div class="b d" style="left:941px;top:337px;width:156px;height:20px"><div class="ar"></div></div><div class="t" style="left:948px;top:341px">普通</div>
<div class="b d c" style="left:941px;top:367px;width:156px;height:20px;padding-top:4px">编辑</div>
<!-- file menu -->
<div class="b" style="left:6px;top:55px;width:197px;height:311px;background:#dfdfe1;border:1px solid #cdcdcd;border-top:0;box-sizing:border-box;border-radius:0 0 5px 5px"></div>
<div class="b" style="left:6px;top:31px;width:45px;height:24px;background:#dfdfe1;border-right:1px solid #999;box-sizing:border-box"></div>
<div class="t" style="left:26px;top:36px">文件</div><div class="t" style="left:71px;top:36px">模板</div><div class="t" style="left:116px;top:36px">插入</div><div class="t" style="left:161px;top:36px">单元格<span class="q" style="margin-left:2px">(C)</span></div><div class="t" style="left:231px;top:36px">服务器</div><div class="t" style="left:285px;top:36px">帮助</div><div class="t" style="left:331px;top:36px">社区</div>
<div class="b" style="left:38px;top:102px;width:151px;height:21px;background:#409bf8"></div>
<div class="b" style="left:10px;top:187px;width:181px;height:1px;background:#c8c8c8"></div>
<div class="b" style="left:10px;top:294px;width:181px;height:1px;background:#c8c8c8"></div>
<div class="t" style="left:42px;top:64px">新建普通报表<span class="q">(N)</span></div><div class="t s" style="left:149px;top:64px">Ctrl-N</div>
<div class="t" style="left:42px;top:85px">新建可视化看板<span class="q">(B)</span></div><div class="t s" style="left:149px;top:85px">Ctrl-B</div>
<div class="t" style="left:42px;top:106px;color:#fff">新建其他模板</div>
<div class="t" style="left:42px;top:127px">打开<span class="m" style="font-size:10px">...</span><span class="q" style="margin-left:3px">(O)</span></div><div class="t s" style="left:149px;top:127px">Ctrl-O</div>
<div class="t" style="left:42px;top:148px">最近打开的<span class="q">(E)</span></div>
<div class="t" style="left:42px;top:169px">关闭<span class="q">(W)</span></div><div class="t s" style="left:149px;top:169px">Ctrl-W</div>
<div class="t g" style="left:42px;top:191px">保存<span class="q">(S)</span></div><div class="t s g" style="left:149px;top:191px">Ctrl-S</div>
<div class="t" style="left:42px;top:213px">另存为<span class="q">(A)</span><span class="m" style="font-size:10px">...</span></div>
<div class="t g" style="left:42px;top:234px">撤销<span class="q">(U)</span></div><div class="t s g" style="left:149px;top:234px">Ctrl-Z</div>
<div class="t g" style="left:42px;top:255px">重做<span class="q">(R)</span></div><div class="t s g" style="left:149px;top:255px">Ctrl-Y</div>
<div class="t" style="left:42px;top:276px">输出</div>
<div class="t" style="left:42px;top:298px">选项<span class="q">(P)</span><span class="m" style="font-size:10px">...</span></div>
<div class="t" style="left:42px;top:320px">切换工作目录</div>
<div class="t" style="left:42px;top:341px">退出<span class="q">(X)</span></div>
<svg class="a" style="left:181px;top:107px" width="6" height="230" fill="#222"><path d="M0 0L5 4.500L0 9Z"/><path d="M0 42L5 46.500L0 51Z"/><path d="M0 171L5 175.500L0 180Z"/><path d="M0 215L5 219.500L0 224Z"/></svg>
<!-- menu icons -->
<svg class="a" style="left:16px;top:62px" width="16" height="300" fill="none" stroke="#333">
<path d="M.5.5H13.500V13.500H.5ZM.5 5H13.500M5 .5V13.500M9.500 .5V13.500M5 9H13.500"/><rect x="1" y="6" width="5" height="7.500" fill="#1b7fd0" stroke="none"/>
<rect x=".5" y="23" width="14" height="10" rx="1.500"/><path d="M3 29L6 26L9 28L12 26V30H3Z" fill="#444" stroke="none"/><path d="M3 36H12"/>
<path d="M.5 43.500H10L14 47V57.500H.5Z"/><rect x="3" y="47" width="3" height="3" fill="#555" stroke="none"/><rect x="8" y="47" width="3" height="3" fill="#555" stroke="none"/><rect x="3" y="52" width="3" height="3" fill="#555" stroke="none"/><rect x="8" y="52" width="3" height="3" fill="#555" stroke="none"/>
<path d="M.5 71.500V66.500H6L7.500 68H14V70M.5 76.500L2.500 70H15.500L13.500 76.500Z"/>
<path d="M1 130H12L14 132V143H1Z" stroke="#aaa" stroke-width="1.500"/><rect x="4" y="130" width="6" height="4" fill="#aaa" stroke="none"/>
<path d="M1 151H12V163H1Z" stroke="#222" stroke-width="1.300"/><rect x="3" y="151" width="6" height="4" fill="#222" stroke="none"/><path d="M8 164H15" stroke="#222" stroke-width="1.500" stroke-dasharray="2 1"/>
<path d="M0 179L6 173V176C11 176 14 179 14 186C12 182 10 181 6 181V184Z" fill="#a9a9ab" stroke="none"/><path d="M14 200L8 194V197C3 197 0 201 0 207C2 203 4 202 8 202V205Z" fill="#a9a9ab" stroke="none"/>
<path d="M1 215H14V227H7L1 232Z" stroke="#222"/><path d="M5 219H10V216.500L14 220.500L10 224.500V222H5Z" fill="#2fae5a" stroke="none"/>
<path d="M0 262H3L9 270H13M0 270H3L9 262H13" stroke="#333" stroke-width="1.600"/><path d="M12 259.500L15.500 262L12 264.500ZM12 267.500L15.500 270L12 272.500Z" fill="#333" stroke="none"/>
</svg>
<!-- submenu -->
<div class="b" style="left:190px;top:99px;width:184px;height:57px;background:#dfdfe1;border:1px solid #cbcbcb;box-sizing:border-box;border-radius:4px"></div>
<svg class="a" style="left:199px;top:106px" width="16" height="37" fill="none" stroke="#333"><path d="M.5 3.500H11L15.500 7V15.500H.5Z"/><path d="M3 7H8M3 10H13M3 13H13" stroke-width="1.500"/><rect x=".5" y="22" width="14" height="14.500"/><path d="M1 25H14" stroke-width="2"/><path d="M3 29H6M9 29H12M3 33H6M9 33H12"/></svg>
<div class="b" style="left:221px;top:123px;width:144px;height:24px;background:#409bf8"></div>
<div class="b" style="left:335px;top:120px;width:29px;height:30px;border-radius:50%;background:#e4dfa5"></div>
<div class="b" style="left:335px;top:125px;width:28px;height:20px;background:#87bdb4;border-radius:10px 0 0 10px"></div>
<div class="b" style="left:221px;top:123px;width:144px;height:24px;border:2px solid #e8423f;box-sizing:border-box"></div>
<div class="t" style="left:225px;top:108px">新建决策报表</div>
<div class="t" style="left:225px;top:129px;color:#fff">新建聚合报表<span class="q" style="color:#dfeeff">(N)</span></div>
<div class="t s" style="left:320px;top:129px;color:#112">Ctrl-<span style="color:#5a6a50">M</span></div>
<div class="b" style="left:0;top:31px;width:1px;height:640px;background:#999"></div>
<div class="b" style="left:1109px;top:31px;width:1px;height:640px;background:#bbb"></div>
</div></body></html>
